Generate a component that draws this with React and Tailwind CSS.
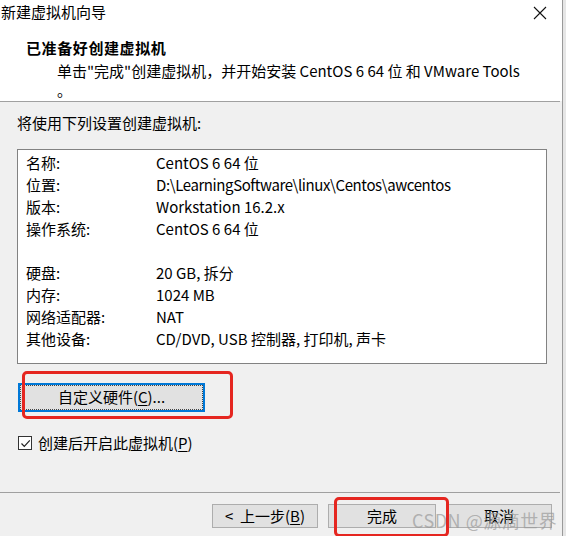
import React from "react";

const font = { fontFamily: "'Segoe UI', 'Noto Sans CJK SC', sans-serif" };

const rows = [
  ["名称:", "CentOS 6 64 位"],
  ["位置:", "D:\\LearningSoftware\\linux\\Centos\\awcentos"],
  ["版本:", "Workstation 16.2.x"],
  ["操作系统:", "CentOS 6 64 位"],
  ["", ""],
  ["硬盘:", "20 GB, 拆分"],
  ["内存:", "1024 MB"],
  ["网络适配器:", "NAT"],
  ["其他设备:", "CD/DVD, USB 控制器, 打印机, 声卡"],
];

function WinButton({ children, className = "" }) {
  return (
    <div
      className={
        "flex items-center justify-center border border-[#adadad] bg-[#e1e1e1] text-[15px] text-black " +
        className
      }
    >
      {children}
    </div>
  );
}

export default function App() {
  return (
    <div
      className="relative flex h-[536px] w-[566px] overflow-hidden bg-[#f0f0f0] text-[15px] text-black"
      style={font}
    >
      <div className="flex w-[562px] flex-col">
        {/* Header */}
        <div className="h-[101px] bg-white">
          <div className="flex h-[24px] items-center justify-between pl-[1px] pr-[15px]">
            <span className="leading-[24px]">新建虚拟机向导</span>
            <svg width="14" height="14" viewBox="0 0 14 14" className="mt-[1px]">
              <path d="M1 1 L13 13 M13 1 L1 13" stroke="#111" strokeWidth="1.1" />
            </svg>
          </div>
          <div className="pl-[26px] pt-[13px]">
            <div className="text-[15px] font-bold leading-[22px] tracking-[0.6px]">已准备好创建虚拟机</div>
            <div className="pl-[31px] pt-[2px] leading-[19px]">
              <div>单击"完成"创建虚拟机，并开始安装 CentOS 6 64 位 和 VMware Tools</div>
              <div>。</div>
            </div>
          </div>
        </div>
        <div className="h-px w-[560px] bg-[#a0a0a0]" />

        {/* Body */}
        <div className="flex flex-1 flex-col">
          <div className="pl-[17px] pt-[10px] leading-[22px]">将使用下列设置创建虚拟机:</div>
          <div className="ml-[17px] mt-[15px] h-[215px] w-[530px] border border-[#828282] bg-white pl-[8px] pt-[2px]">
            {rows.map(([label, value], i) => (
              <div key={i} className="flex h-[22px] items-center">
                <span className="w-[130px]">{label}</span>
                <span className={i === 1 ? "tracking-[-0.4px]" : ""}>{value}</span>
              </div>
            ))}
          </div>

          <div className="ml-[18px] mt-[19px] flex h-[29px] w-[187px] items-center justify-center border-2 border-[#0078d7] bg-[#e1e1e1]">
            <div className="flex h-full w-full items-center justify-center border border-dotted border-[#444]">
              自定义硬件(<span className="underline underline-offset-2">C</span>)...
            </div>
          </div>

          <div className="ml-[18px] mt-[22px] flex items-center gap-[6px]">
            <div className="flex h-[14px] w-[14px] items-center justify-center border border-[#333] bg-white">
              <svg width="11" height="11" viewBox="0 0 11 11">
                <path d="M1.5 5.5 L4.3 8.3 L9.8 2.3" fill="none" stroke="#222" strokeWidth="1.2" />
              </svg>
            </div>
            <span className="leading-[18px]">
              创建后开启此虚拟机(<span className="underline underline-offset-2">P</span>)
            </span>
          </div>

          <div className="mt-[40px] h-px w-[560px] bg-[#a0a0a0]" />
          <div className="flex gap-[10px] pl-[212px] pt-[11px]">
            <WinButton className="h-[24px] w-[106px]">
              &lt;&nbsp; 上一步(<span className="underline underline-offset-2">B</span>)
            </WinButton>
            <WinButton className="h-[24px] w-[108px]">完成</WinButton>
            <WinButton className="h-[24px] w-[106px]">取消</WinButton>
          </div>
        </div>
      </div>

      {/* right edge of window behind */}
      <div className="w-[4px] border-l border-[#9a9a9a] bg-[#e6e6e6]" />

      {/* annotations */}
      <div className="absolute left-[22px] top-[371px] h-[48px] w-[211px] rounded-[5px] border-[3px] border-[#e52620]" />
      <div className="absolute left-[334px] top-[497px] h-[40px] w-[115px] rounded-[5px] border-[3px] border-[#e52620]" />

      {/* watermark */}
      <div className="absolute left-[412px] top-[507px] text-[18px] tracking-[0.5px] text-[#9a9a9a]/70">
        CSDN @源滴世界
      </div>
    </div>
  );
}
